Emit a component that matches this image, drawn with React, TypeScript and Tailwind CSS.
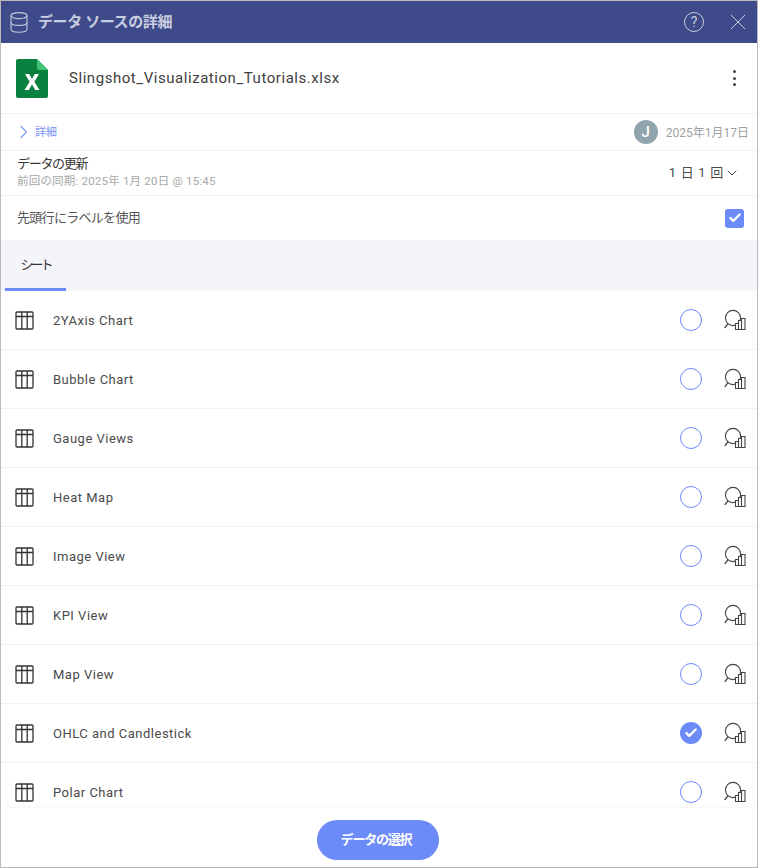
import React from "react";
import { ChevronDown, Check } from "lucide-react";

const FONT = "font-['Roboto','Noto_Sans_CJK_JP',sans-serif]";
const sheets = ["2YAxis Chart", "Bubble Chart", "Gauge Views", "Heat Map", "Image View", "KPI View", "Map View", "OHLC and Candlestick", "Polar Chart", "Radial Chart"];

function TableIcon() {
  return (
    <svg width="19" height="19" viewBox="0 0 19 19" fill="none" stroke="#333" strokeWidth="1.3" className="mt-[1px]">
      <rect x="1" y="1" width="17" height="17" rx="1" />
      <path d="M1 5.5H18M6.8 1V18M12.2 1V18" />
    </svg>
  );
}

function PreviewIcon() {
  return (
    <svg width="22" height="22" viewBox="0 0 22 22" fill="none" stroke="#444" strokeWidth="1.1">
      <circle cx="9" cy="9" r="7.6" fill="#fff" />
      <path d="M3.8 14.8L0.8 18.8" strokeWidth="1.4" />
      <path d="M11.5 20.5V14.5H14.5V11.5H17.5V9.5H21V20.5Z" fill="#fff" />
      <path d="M14.5 14.5V20.5M17.5 11.5V20.5" strokeWidth="1.1" />
    </svg>
  );
}

function DbIcon() {
  return (
    <svg width="18" height="21" viewBox="0 0 18 21" fill="none" stroke="#c3c8dd" strokeWidth="1.1">
      <ellipse cx="9" cy="3.6" rx="8" ry="3" />
      <path d="M1 3.6V17.2C1 18.9 4.6 20.2 9 20.2S17 18.9 17 17.2V3.6" />
      <path d="M1 10.4C1 12.1 4.6 13.4 9 13.4S17 12.1 17 10.4" />
    </svg>
  );
}

function ExcelIcon() {
  return (
    <svg width="32" height="39" viewBox="0 0 32 39">
      <path d="M2 0H21L32 11V37C32 38.1 31.1 39 30 39H2C0.9 39 0 38.1 0 37V2C0 0.9 0.9 0 2 0Z" fill="#0b8140" />
      <path d="M21 0L32 11H23C21.9 11 21 10.1 21 9Z" fill="#3fc476" />
      <path d="M8.5 31L13.6 22.8L9 15H13.2L16 20L18.8 15H23L18.4 22.8L23.5 31H19.2L16 25.6L12.8 31Z" fill="#fff" />
    </svg>
  );
}

function Row({ name, checked }: { name: string; checked?: boolean }) {
  return (
    <div className="h-[59px] shrink-0 flex items-center pl-[14px] pr-[11px] border-b border-[#f2f2f2]">
      <TableIcon />
      <span className="ml-[19px] pt-[1px] text-[13px] tracking-[0.5px] text-[#4a4a4a] flex-1">{name}</span>
      {checked ? (
        <span className="w-[22px] h-[22px] rounded-full bg-[#6c8af8] flex items-center justify-center">
          <Check size={14} strokeWidth={4} className="text-white" />
        </span>
      ) : (
        <span className="w-[22px] h-[22px] rounded-full border border-[#6c8af8] bg-white" />
      )}
      <span className="ml-[22px] flex"><PreviewIcon /></span>
    </div>
  );
}

export default function App() {
  return (
    <div className={`${FONT} w-[758px] h-[868px] border border-[#b9b9b9] bg-white flex flex-col overflow-hidden relative`}>
      <header className="h-[42px] shrink-0 bg-[#3e4a89] flex items-center pl-[9px] pr-[11px]">
        <DbIcon />
        <h1 className="ml-[10px] text-[15px] tracking-[-0.4px] font-bold text-[#c9cde0] flex-1">データ ソースの詳細</h1>
        <span className="w-[20px] h-[20px] rounded-full border border-[#c9cde0] text-[#c9cde0] text-[14px] flex items-center justify-center">?</span>
        <svg width="16" height="16" viewBox="0 0 16 16" stroke="#c9cde0" strokeWidth="1" className="ml-[26px]">
          <path d="M1 1L15 15M15 1L1 15" />
        </svg>
      </header>

      <div className="h-[71px] shrink-0 flex items-center pl-[15px] pr-[14px] border-b border-[#f2f2f2]">
        <ExcelIcon />
        <span className="ml-[21px] text-[15px] tracking-[0.55px] text-[#404040] flex-1">Slingshot_Visualization_Tutorials.xlsx</span>
        <span className="flex flex-col gap-[3.5px] items-center mr-[7px]">
          <i className="w-[3px] h-[3px] rounded-full bg-[#444]" />
          <i className="w-[3px] h-[3px] rounded-full bg-[#444]" />
          <i className="w-[3px] h-[3px] rounded-full bg-[#444]" />
        </span>
      </div>

      <div className="h-[37px] shrink-0 flex items-center pl-[18px] pr-[8px] border-b border-[#f2f2f2]">
        <svg width="9" height="14" viewBox="0 0 9 14" fill="none" stroke="#7b95f5" strokeWidth="1.2">
          <path d="M1.5 1L7.5 7L1.5 13" />
        </svg>
        <span className="ml-[7px] pt-[2px] text-[11px] text-[#7b95f5] flex-1">詳細</span>
        <span className="w-[24px] h-[24px] rounded-full bg-[#90a4ae] text-white text-[15px] font-medium flex items-center justify-center">J</span>
        <span className="ml-[8px] pt-[2px] text-[12px] text-[#a0a0a0]">2025年1月17日</span>
      </div>

      <div className="h-[45px] shrink-0 flex items-center pl-[16px] pr-[17px] border-b border-[#f2f2f2]">
        <div className="flex-1 flex flex-col mt-[-2px]">
          <span className="text-[13px] leading-[16px] tracking-[-1.3px] text-[#3a3a3a]">データの更新</span>
          <span className="mt-[2px] text-[11.5px] leading-[14px] tracking-[0.2px] text-[#a8a8a8]">前回の同期: 2025年 1月 20日 @ 15:45</span>
        </div>
        <span className="text-[13px] tracking-[0.7px] text-[#4a4a4a]">1 日 1 回</span>
        <ChevronDown size={16} strokeWidth={1.4} className="text-[#333]" />
      </div>

      <div className="h-[44px] shrink-0 flex items-center pl-[16px] pr-[13px]">
        <span className="flex-1 text-[13px] tracking-[-0.7px] text-[#555]">先頭行にラベルを使用</span>
        <span className="w-[19px] h-[19px] rounded-[3px] bg-[#6c8af8] flex items-center justify-center">
          <Check size={14} strokeWidth={4} className="text-white" />
        </span>
      </div>

      <div className="h-[51px] shrink-0 bg-[#f4f5f9] flex">
        <div className="ml-[4px] w-[61px] h-[51px] pt-[2px] border-b-[3px] border-[#6c8af8] flex items-center justify-center text-[13px] tracking-[-3px] text-[#333]">シート</div>
      </div>

      <div className="flex-1 min-h-0 overflow-hidden flex flex-col">
        {sheets.map((s) => (
          <Row key={s} name={s} checked={s === "OHLC and Candlestick"} />
        ))}
      </div>

      <footer className="absolute left-0 right-0 bottom-0 h-[59px] bg-white flex items-start justify-center pt-[12px] shadow-[0_-2px_6px_-4px_rgba(0,0,0,0.12)]">
        <button className="w-[122px] h-[40px] ml-[-2px] pr-[4px] rounded-full bg-[#6c8af8] text-white text-[13px] tracking-[-1.2px] font-bold">データの選択</button>
      </footer>
    </div>
  );
}
